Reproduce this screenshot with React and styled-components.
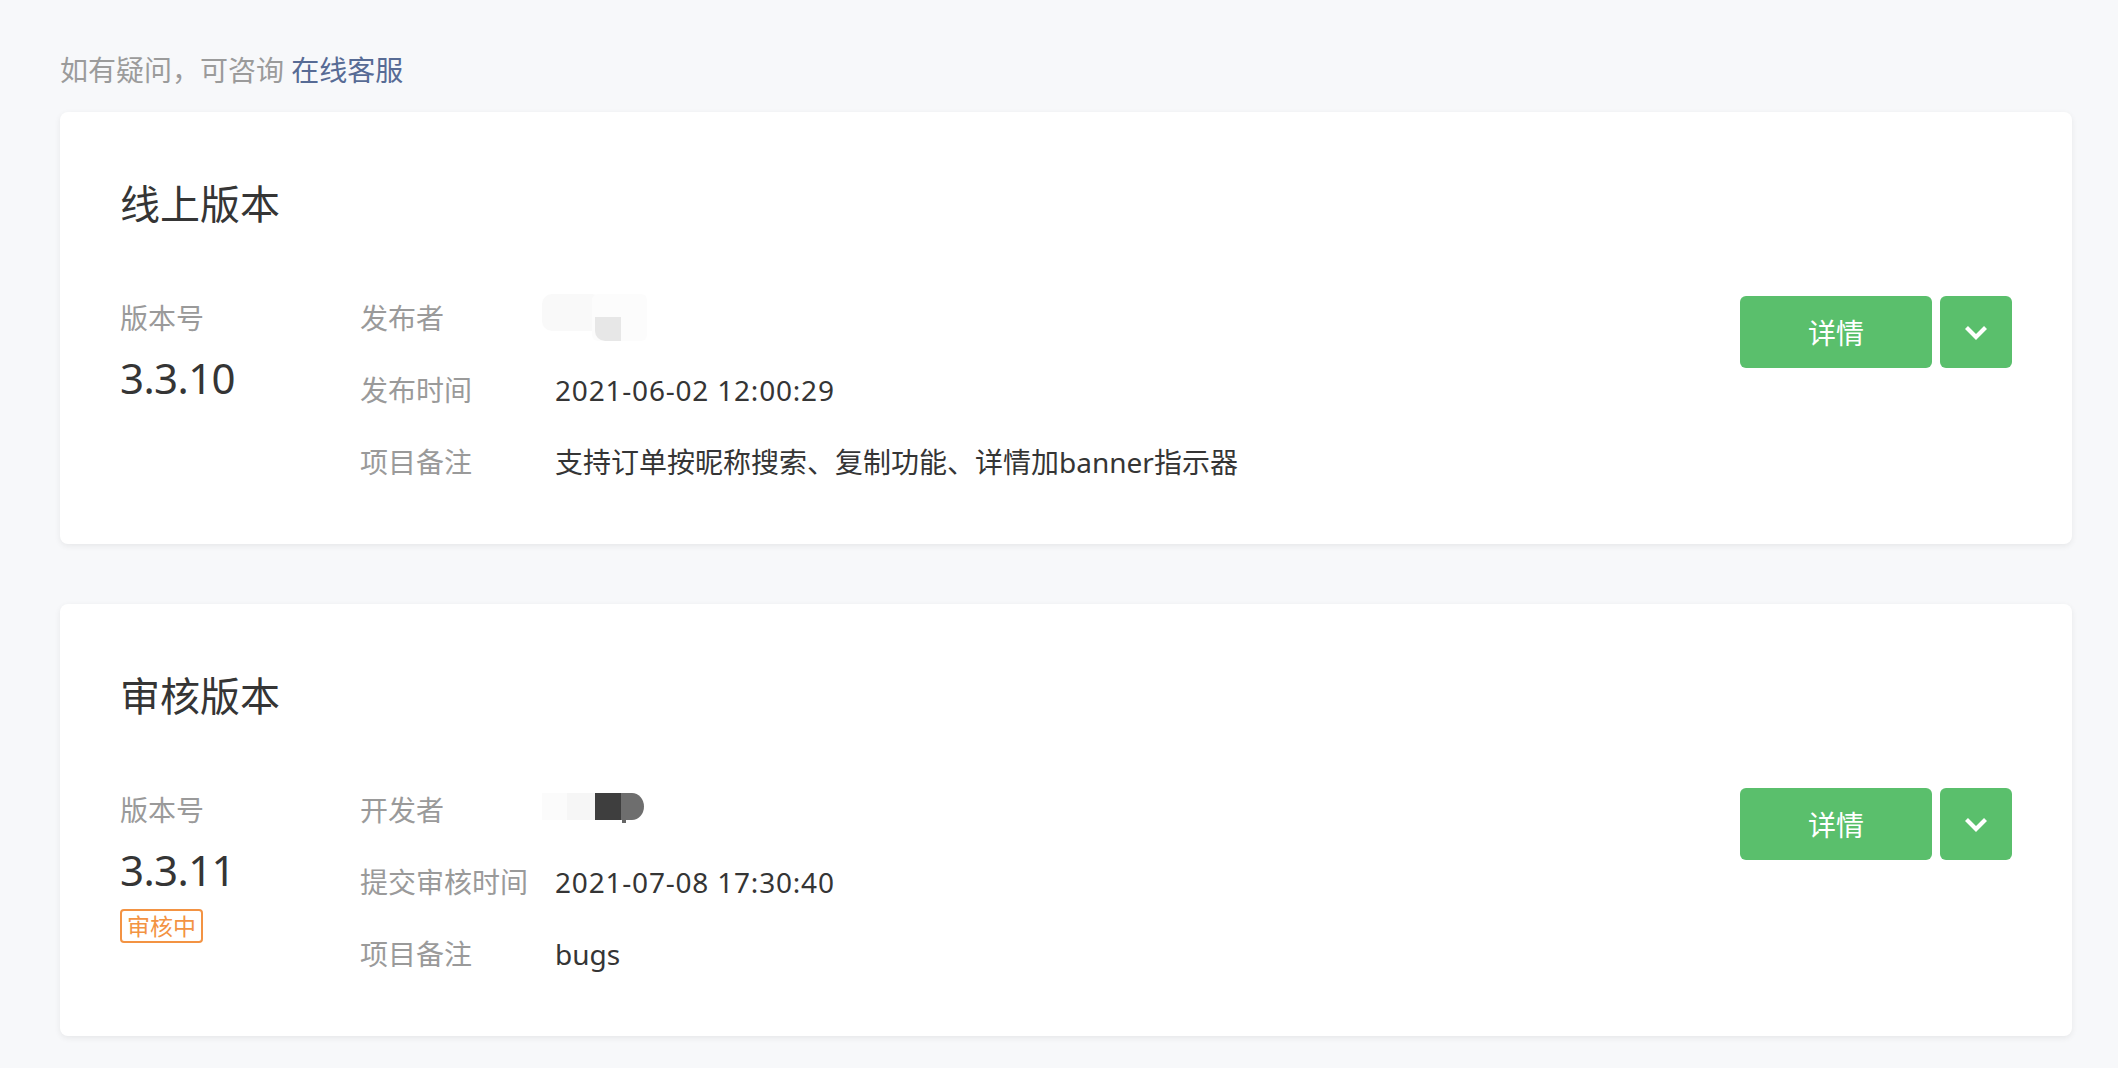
import React from "react";
import styled, { createGlobalStyle } from "styled-components";

const GlobalStyle = createGlobalStyle`
  html, body {
    margin: 0;
    padding: 0;
    background: #f7f8fa;
  }
  body {
    font-family: "Noto Sans", "Noto Sans CJK SC", sans-serif;
    -webkit-font-smoothing: antialiased;
  }
  * { box-sizing: border-box; }
`;

const Page = styled.div`
  min-height: 100vh;
  padding: 50px 46px 32px 60px;
  background: #f7f8fa;
`;

const Notice = styled.div`
  font-size: 28px;
  line-height: 40px;
  color: #9b9b9b;
  margin-bottom: 22px;
`;

const Link = styled.a`
  color: #576b95;
  text-decoration: none;
  cursor: pointer;
`;

const Card = styled.section`
  background: #ffffff;
  border-radius: 8px;
  box-shadow: 0 2px 6px rgba(0, 0, 0, 0.07);
  padding: 60px 60px 62px 60px;
  & + & {
    margin-top: 60px;
  }
`;

const Title = styled.h2`
  margin: 0;
  font-size: 40px;
  line-height: 64px;
  font-weight: 400;
  color: #353535;
`;

const Body = styled.div`
  display: flex;
  align-items: flex-start;
  margin-top: 60px;
`;

const VersionCol = styled.div`
  width: 240px;
  flex-shrink: 0;
  padding-top: 2px;
  display: flex;
  flex-direction: column;
  align-items: flex-start;
`;

const Label = styled.div`
  font-size: 28px;
  line-height: 40px;
  color: #9a9a9a;
`;

const VersionNum = styled.div`
  margin-top: 12px;
  font-size: 42px;
  line-height: 56px;
  letter-spacing: -0.6px;
  color: #353535;
`;

const Badge = styled.span`
  display: inline-block;
  margin-top: 11px;
  height: 34px;
  padding: 0 5px;
  border: 2px solid #f39343;
  border-radius: 4px;
  color: #f39343;
  font-size: 23px;
  line-height: 30px;
`;

const InfoList = styled.div`
  flex: 1;
  padding-top: 2px;
  display: flex;
  flex-direction: column;
  gap: 32px;
`;

const InfoRow = styled.div`
  display: flex;
  height: 40px;
  font-size: 28px;
  line-height: 40px;
`;

const InfoLabel = styled.div`
  width: 195px;
  flex-shrink: 0;
  color: #9a9a9a;
`;

const InfoValue = styled.div`
  color: #353535;
  white-space: nowrap;
  letter-spacing: ${(p) => (p.$numeric ? "0.8px" : "0")};
`;

const Mosaic = styled.svg`
  display: block;
  margin: ${(p) => p.$margin};
  overflow: visible;
`;

const Actions = styled.div`
  display: flex;
  gap: 8px;
  flex-shrink: 0;
`;

const Button = styled.button`
  height: 72px;
  width: ${(p) => (p.$icon ? "72px" : "192px")};
  border: none;
  border-radius: 6px;
  background: #5abf6c;
  color: #ffffff;
  font-family: inherit;
  font-size: 28px;
  padding: 0;
  display: flex;
  align-items: center;
  justify-content: center;
  cursor: pointer;
`;

const Chevron = () => (
  <svg width="26" height="26" viewBox="0 0 26 26" fill="none">
    <path
      d="M3.5 8.5l9.5 9.5 9.5-9.5"
      stroke="#ffffff"
      strokeWidth="4.2"
      strokeLinecap="butt"
      strokeLinejoin="miter"
    />
  </svg>
);

const LightMosaic = () => (
  <Mosaic width="105" height="47" viewBox="0 0 105 47" $margin="-4px 0 -3px -13px">
    <rect x="0" y="0" width="60" height="37" rx="10" fill="#f9f9f9" />
    <rect x="50" y="0" width="55" height="47" rx="6" fill="#fcfcfc" />
    <path d="M53 23 H79 V47 H63 A10 10 0 0 1 53 37 Z" fill="#e7e7e7" />
  </Mosaic>
);

const DarkMosaic = () => (
  <Mosaic width="102" height="31" viewBox="0 0 102 31" $margin="3px 0 0 -13px">
    <rect x="0" y="0" width="25" height="27" fill="#fbfbfb" />
    <rect x="25" y="0" width="28" height="27" fill="#f6f6f6" />
    <rect x="53" y="0" width="26" height="27" fill="#3e3e3e" />
    <path d="M79 0 H90 A12 13.5 0 0 1 90 27 H79 Z" fill="#6e6e6e" />
    <rect x="80" y="27" width="4" height="3" fill="#666" />
  </Mosaic>
);

const versions = [
  {
    title: "线上版本",
    version: "3.3.10",
    badge: null,
    rows: [
      { label: "发布者", mosaic: "light" },
      { label: "发布时间", value: "2021-06-02 12:00:29", numeric: true },
      { label: "项目备注", value: "支持订单按昵称搜索、复制功能、详情加banner指示器" },
    ],
  },
  {
    title: "审核版本",
    version: "3.3.11",
    badge: "审核中",
    rows: [
      { label: "开发者", mosaic: "dark" },
      { label: "提交审核时间", value: "2021-07-08 17:30:40", numeric: true },
      { label: "项目备注", value: "bugs" },
    ],
  },
];

const VersionCard = ({ data }) => (
  <Card>
    <Title>{data.title}</Title>
    <Body>
      <VersionCol>
        <Label>版本号</Label>
        <VersionNum>{data.version}</VersionNum>
        {data.badge && <Badge>{data.badge}</Badge>}
      </VersionCol>
      <InfoList>
        {data.rows.map((r) => (
          <InfoRow key={r.label}>
            <InfoLabel>{r.label}</InfoLabel>
            <InfoValue $numeric={r.numeric}>
              {r.mosaic === "light" && <LightMosaic />}
              {r.mosaic === "dark" && <DarkMosaic />}
              {r.value}
            </InfoValue>
          </InfoRow>
        ))}
      </InfoList>
      <Actions>
        <Button>详情</Button>
        <Button $icon aria-label="更多">
          <Chevron />
        </Button>
      </Actions>
    </Body>
  </Card>
);

export default function App() {
  return (
    <>
      <GlobalStyle />
      <Page>
        <Notice>
          如有疑问，可咨询 <Link>在线客服</Link>
        </Notice>
        {versions.map((v) => (
          <VersionCard key={v.title} data={v} />
        ))}
      </Page>
    </>
  );
}
